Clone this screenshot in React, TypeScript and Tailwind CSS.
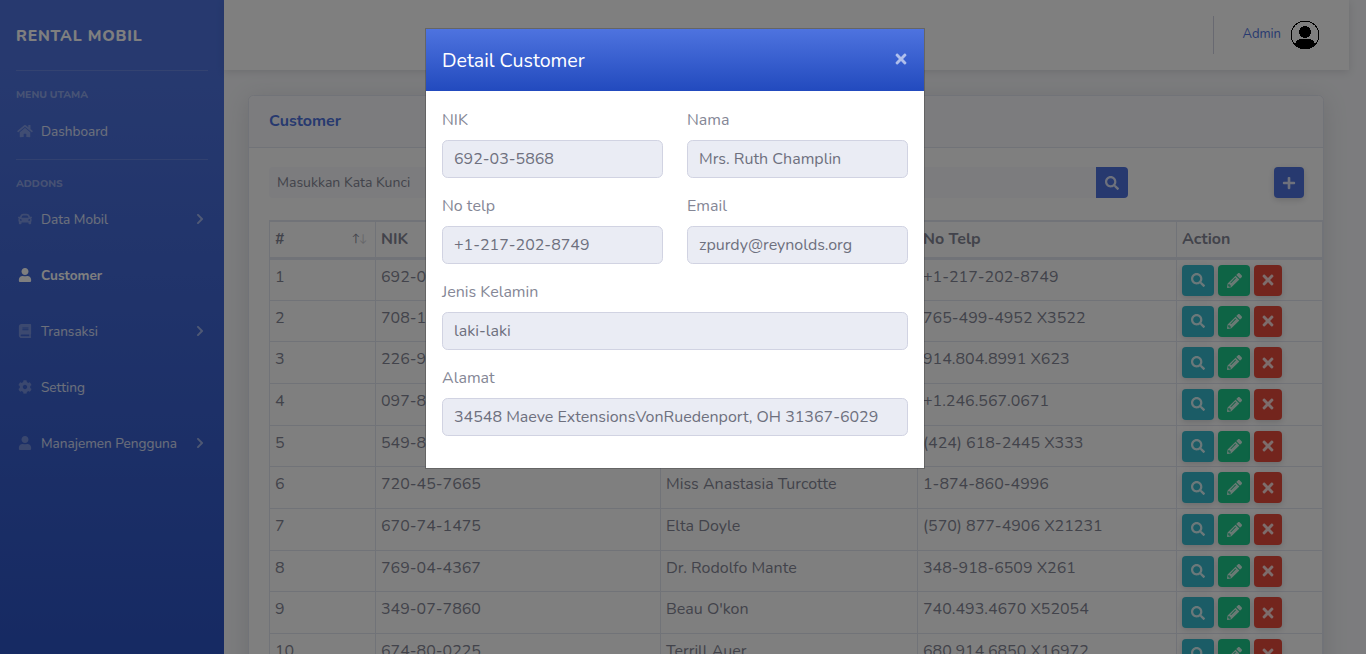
import { FaHome, FaCar, FaUser, FaBook, FaCog, FaChevronRight, FaSearch, FaPencilAlt, FaTimes, FaPlus } from "react-icons/fa";
import type { IconType } from "react-icons";

const font = "font-['Nunito','Lato','Noto_Sans',sans-serif]";

const rows = [
  ["1", "692-03-5868", "Mrs. Ruth Champlin", "+1-217-202-8749"],
  ["2", "708-13-2044", "Miss Lauren Kuhn", "765-499-4952 X3522"],
  ["3", "226-91-7730", "Dr. Emery Hills", "914.804.8991 X623"],
  ["4", "097-82-1156", "Kaley Rohan", "+1.246.567.0671"],
  ["5", "549-87-3301", "Jovan Lind", "(424) 618-2445 X333"],
  ["6", "720-45-7665", "Miss Anastasia Turcotte", "1-874-860-4996"],
  ["7", "670-74-1475", "Elta Doyle", "(570) 877-4906 X21231"],
  ["8", "769-04-4367", "Dr. Rodolfo Mante", "348-918-6509 X261"],
  ["9", "349-07-7860", "Beau O'kon", "740.493.4670 X52054"],
  ["10", "674-80-0225", "Terrill Auer", "680.914.6850 X16972"],
];

function NavItem({ icon: Icon, label, active, arrow }: { icon: IconType; label: string; active?: boolean; arrow?: boolean }) {
  return (
    <div className={`flex items-center h-14 pl-[17px] pr-[18px] text-[13.6px] ${active ? "text-white font-bold" : "text-white/80"}`}>
      <Icon className={`w-4 h-[14px] mr-2 ${active ? "text-white" : "text-white/30"}`} />
      <span className="flex-1 pt-[2px]">{label}</span>
      {arrow && <FaChevronRight className="w-3 h-3 text-white/50" />}
    </div>
  );
}

function Sidebar() {
  return (
    <aside className="w-[224px] shrink-0 bg-linear-to-b from-[#4e73df] from-[10%] to-[#224abe] to-[127%] px-4">
      <div className="h-[70px] pt-[3px] flex items-center text-white font-extrabold text-[15.7px] tracking-[0.8px]">RENTAL MOBIL</div>
      <hr className="border-white/15" />
      <div className="mt-4 text-[10.4px] leading-4 font-extrabold text-white/40">MENU UTAMA</div>
      <div className="-mx-4"><NavItem icon={FaHome} label="Dashboard" /></div>
      <hr className="border-white/15" />
      <div className="mt-4 h-[15px] text-[10.4px] leading-4 font-extrabold text-white/40">ADDONS</div>
      <div className="-mx-4">
        <NavItem icon={FaCar} label="Data Mobil" arrow />
        <NavItem icon={FaUser} label="Customer" active />
        <NavItem icon={FaBook} label="Transaksi" arrow />
        <NavItem icon={FaCog} label="Setting" />
        <NavItem icon={FaUser} label="Manajemen Pengguna" arrow />
      </div>
    </aside>
  );
}

function Avatar() {
  return (
    <svg viewBox="0 0 30 30" className="w-[30px] h-[30px]" shapeRendering="crispEdges">
      <circle cx="15" cy="15" r="14" fill="white" stroke="black" strokeWidth="1" />
      <circle cx="15" cy="12" r="6" fill="black" />
      <path d="M5 25c0-3 3-6 6-6h8c3 0 6 3 6 6-3 2.6-6 4-10 4s-7-1.400-10-4z" fill="black" />
    </svg>
  );
}

function ActionButton({ icon: Icon, color, width = "w-8", size = "w-[14px] h-[14px]" }: { icon: IconType; color: string; width?: string; size?: string }) {
  return (
    <div className={`h-[31px] rounded-[4px] flex items-center justify-center shadow-[0_2px_6px_rgba(58,59,69,0.2)] ${width} ${color}`}>
      <Icon className={`${size} text-white/80`} />
    </div>
  );
}

function CustomerTable() {
  const cell = "border border-[#e3e6f0] px-[5px]";
  const head = `${cell} border-t-2 border-b-[3px] align-middle`;
  return (
    <table className="table-fixed border-collapse w-[1053px] text-[#858796] text-[16px] mt-[22px]">
      <colgroup>
        <col className="w-[106px]" />
        <col className="w-[285px]" />
        <col className="w-[257px]" />
        <col className="w-[259px]" />
        <col className="w-[146px]" />
      </colgroup>
      <thead>
        <tr className="h-[37px] font-bold text-left">
          <th className={head}>
            <div className="flex justify-between items-center">
              <span>#</span>
              <span className="text-[11px] font-normal tracking-[-1px] pr-[4px]"><span>↑</span><span className="opacity-40">↓</span></span>
            </div>
          </th>
          <th className={head}>NIK</th>
          <th className={head}>Nama</th>
          <th className={head}>No Telp</th>
          <th className={head}>Action</th>
        </tr>
      </thead>
      <tbody>
        {rows.map((r, idx) => (
          <tr key={r[0]} className={idx % 3 === 0 ? "h-[42px]" : "h-[41.5px]"}>
            {r.map((c, i) => (
              <td key={i} className={`${cell} align-top pt-[5px]`}>{c}</td>
            ))}
            <td className={`${cell} align-top pt-[5px]`}>
              <div className="flex gap-1">
                <ActionButton icon={FaSearch} color="bg-[#36b9cc]" />
                <ActionButton icon={FaPencilAlt} color="bg-[#1cc88a]" size="w-[15px] h-[15px]" />
                <ActionButton icon={FaTimes} color="bg-[#e74a3b]" width="w-7" size="w-4 h-4" />
              </div>
            </td>
          </tr>
        ))}
      </tbody>
    </table>
  );
}

function Field({ label, value }: { label: string; value: string }) {
  return (
    <div className="mb-4">
      <div className="text-[#858796] text-[16px] leading-6 mb-2">{label}</div>
      <div className="h-[38px] flex items-center px-[11px] rounded-[5.6px] border border-[#d1d3e2] bg-[#eaecf4] text-[#6e707e] text-[16px] whitespace-nowrap">{value}</div>
    </div>
  );
}

function DetailModal() {
  return (
    <div className="absolute left-[425px] top-[28px] w-[500px] border border-black/20 bg-white bg-clip-padding">
      <div className="h-[62px] bg-linear-to-b from-[#4e73df] to-[#224abe] flex items-center justify-between pl-4 pr-[15px]">
        <span className="text-white text-[19.6px] pt-[2px]">Detail Customer</span>
        <FaTimes className="w-4 h-4 text-white/60 mb-[2px]" />
      </div>
      <div className="pt-[17px] px-4 pb-4">
        <div className="grid grid-cols-2 gap-x-6">
          <Field label="NIK" value="692-03-5868" />
          <Field label="Nama" value="Mrs. Ruth Champlin" />
          <Field label="No telp" value="+1-217-202-8749" />
          <Field label="Email" value="zpurdy@reynolds.org" />
        </div>
        <Field label="Jenis Kelamin" value="laki-laki" />
        <Field label="Alamat" value="34548 Maeve ExtensionsVonRuedenport, OH 31367-6029" />
      </div>
    </div>
  );
}

export default function App() {
  return (
    <div className={`relative flex h-screen overflow-hidden bg-[#f8f9fc] ${font}`}>
      <Sidebar />
      <main className="flex-1 min-w-0 pr-[17px]">
        <header className="h-[70px] bg-white shadow-[0_2px_8px_rgba(58,59,69,0.15)] flex items-center justify-end pr-[29px]">
          <div className="w-px h-[38px] bg-[#d1d3e2] mr-[28px]" />
          <span className="text-[13px] text-[#4e73df] mr-[9px]">Admin</span>
          <Avatar />
        </header>
        <section className="mt-[25px] ml-[24px] w-[1076px] bg-white rounded-[5.6px] border border-[#e3e6f0] shadow-[0_4px_24px_rgba(58,59,69,0.15)]">
          <div className="h-[52px] pb-[2px] bg-[#f8f9fc] border-b border-[#e3e6f0] rounded-t-[5.6px] flex items-center px-5 font-bold text-[16px] text-[#4e73df]">Customer</div>
          <div className="pl-5 pt-[19px] pb-5">
            <div className="flex items-center">
              <div className="w-[827px] h-[31px] bg-[#f8f9fc] rounded-l-[4px] flex items-center px-2 text-[14px] text-[#858796]">Masukkan Kata Kunci</div>
              <div className="w-8 h-[31px] bg-[#4e73df] rounded-r-[4px] flex items-center justify-center">
                <FaSearch className="w-[14px] h-[14px] text-white/80" />
              </div>
              <div className="ml-[146px] w-[30px] h-[31px] bg-[#4e73df] rounded-[4px] flex items-center justify-center shadow-[0_2px_6px_rgba(58,59,69,0.2)]">
                <FaPlus className="w-[14px] h-[14px] text-white/80" />
              </div>
            </div>
            <CustomerTable />
          </div>
        </section>
      </main>
      <div className="absolute inset-0 bg-black/50" />
      <DetailModal />
    </div>
  );
}
